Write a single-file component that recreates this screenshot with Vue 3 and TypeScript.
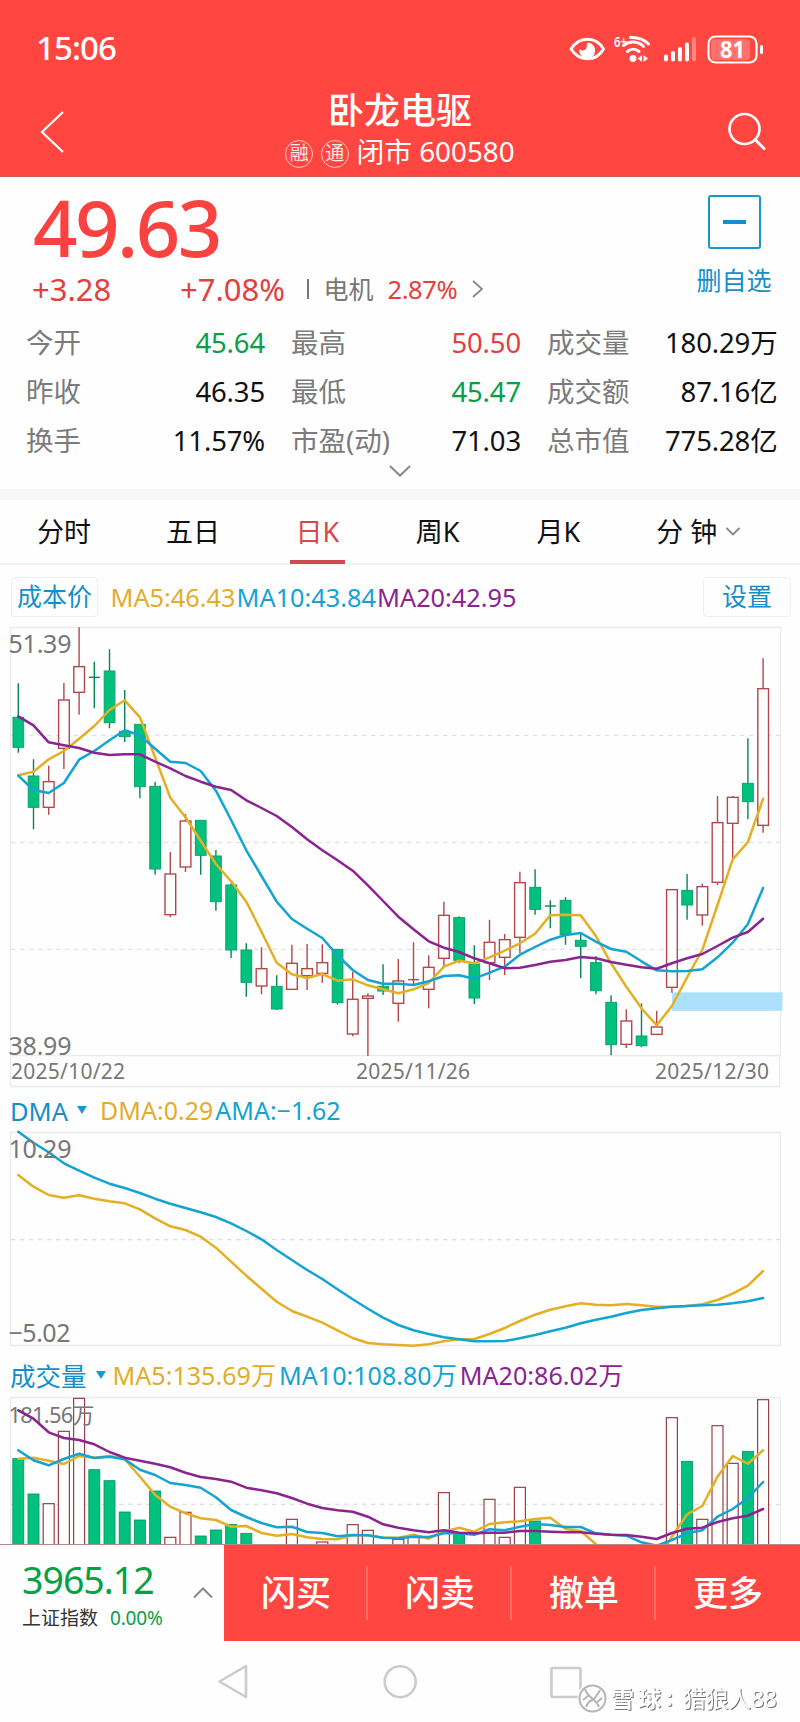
<script setup lang="ts">
type Tone = 'up' | 'down' | 'flat'
type Candle = [kind: 'r' | 'g', high: number, top: number, bottom: number, low: number]

interface Stat { label: string; value: string; tone: Tone }

const stats: Stat[] = [
  { label: '今开', value: '45.64', tone: 'down' },
  { label: '最高', value: '50.50', tone: 'up' },
  { label: '成交量', value: '180.29万', tone: 'flat' },
  { label: '昨收', value: '46.35', tone: 'flat' },
  { label: '最低', value: '45.47', tone: 'down' },
  { label: '成交额', value: '87.16亿', tone: 'flat' },
  { label: '换手', value: '11.57%', tone: 'flat' },
  { label: '市盈(动)', value: '71.03', tone: 'flat' },
  { label: '总市值', value: '775.28亿', tone: 'flat' },
]

const tabs = ['分时', '五日', '日K', '周K', '月K', '分 钟']
const actions = ['闪买', '闪卖', '撤单', '更多']

const PITCH = 15.2
const cx = (i: number) => 18.3 + i * PITCH

// Series are stored in thirds of a pixel, in blocks that share an origin.
const at = (origin: number, v: number[]) => v.map((n) => origin + n / 3)
const points = (ys: number[]) => ys.map((y, i) => `${cx(i).toFixed(1)},${y.toFixed(1)}`).join(' ')
const block = (origin: number, rows: Candle[]) =>
  rows.map(([k, h, t, b, l]) => ({ up: k === 'r', h: origin + h / 3, t: origin + t / 3, b: origin + b / 3, l: origin + l / 3 }))

// Price chart, origin at its top edge
const candles = [
  ...block(0, [
    ['g', 190, 292, 382, 398], ['g', 418, 468, 562, 628], ['r', 437, 485, 562, 584], ['r', 189, 240, 385, 447],
    ['r', 22, 140, 217, 284], ['g', 125, 172, 172, 265], ['g', 88, 153, 308, 325], ['g', 210, 334, 350, 366],
    ['g', 313, 313, 500, 535], ['g', 485, 499, 747, 764], ['r', 696, 762, 884, 892], ['r', 582, 603, 741, 756],
    ['g', 601, 601, 706, 764], ['g', 690, 708, 845, 872], ['g', 790, 795, 990, 1014], ['g', 970, 990, 1087, 1130],
    ['r', 982, 1046, 1098, 1123],
  ]),
  ...block(160, [
    ['g', 586, 619, 687, 690], ['r', 494, 550, 628, 628], ['r', 492, 566, 587, 630], ['r', 493, 548, 580, 608],
    ['g', 508, 508, 668, 674], ['r', 575, 658, 762, 769], ['r', 640, 648, 655, 828], ['g', 553, 619, 633, 645],
    ['r', 537, 603, 670, 725], ['r', 487, 599, 599, 615], ['r', 526, 562, 628, 685], ['r', 365, 406, 535, 560],
    ['g', 409, 413, 541, 550], ['g', 496, 552, 654, 672], ['r', 419, 487, 548, 600], ['r', 462, 479, 532, 585],
    ['r', 275, 308, 472, 520],
  ]),
  ...block(20, [
    ['g', 688, 742, 808, 824], ['g', 781, 798, 798, 865], ['g', 772, 781, 884, 914], ['g', 880, 901, 919, 1014],
    ['g', 948, 968, 1052, 1063], ['g', 1066, 1087, 1214, 1246], ['r', 1108, 1143, 1213, 1224], ['g', 1090, 1188, 1217, 1222],
    ['r', 1112, 1161, 1183, 1183], ['r', 749, 749, 1042, 1058], ['g', 702, 751, 795, 839], ['r', 731, 740, 825, 857],
    ['r', 468, 548, 727, 735], ['r', 468, 472, 550, 655], ['g', 295, 430, 485, 538], ['r', 55, 146, 556, 578],
  ]),
]

const priceLines = [
  {
    cls: 'ln-y',
    pts: points([
      ...at(0, [466, 455, 418, 393, 356, 318, 270, 241, 292, 412, 533, 592, 662, 732, 784, 845, 935]),
      ...at(160, [548, 583, 594, 582, 602, 598, 616, 628, 640, 628, 609, 560, 542, 550, 532, 512, 490]),
      ...at(20, [881, 826, 824, 826, 888, 970, 1040, 1105, 1156, 1098, 1012, 930, 795, 658, 606, 476]),
    ]),
  },
  {
    cls: 'ln-b',
    pts: points([
      ...at(0, [467, 510, 519, 489, 419, 393, 361, 331, 346, 386, 425, 429, 453, 512, 600, 691, 768]),
      ...at(160, [365, 417, 446, 474, 526, 570, 600, 611, 611, 615, 604, 588, 586, 596, 578, 560, 524]),
      ...at(20, [921, 899, 885, 879, 905, 927, 935, 964, 991, 994, 993, 988, 952, 908, 852, 744]),
    ]),
  },
  {
    cls: 'ln-p',
    pts: points([
      ...at(0, [289, 316, 367, 376, 384, 398, 405, 403, 403, 425, 445, 468, 485, 500, 510, 541, 564]),
      ...at(160, [108, 141, 178, 211, 241, 272, 316, 363, 410, 448, 484, 503, 516, 535, 550, 565, 563]),
      ...at(20, [975, 965, 960, 951, 955, 966, 974, 982, 986, 970, 955, 942, 918, 893, 876, 836]),
    ]),
  },
]

const dmaLines = [
  {
    cls: 'ln-y',
    pts: points(at(-50, [
      285, 320, 345, 353, 346, 356, 364, 370, 388, 415, 439, 450, 470, 503, 545, 587, 626, 665, 693, 710, 728, 751, 774, 789, 793,
      795, 797, 793, 784, 778, 777, 762, 744, 723, 704, 689, 679, 670, 674, 676, 672, 676, 680, 680, 678, 673, 660, 641, 617, 573,
    ])),
  },
  {
    cls: 'ln-b',
    pts: points(at(-50, [
      155, 188, 217, 250, 272, 293, 311, 324, 339, 356, 371, 384, 397, 411, 430, 453, 478, 510, 540, 570, 597, 628, 658, 686, 713,
      735, 751, 762, 772, 778, 784, 784, 783, 775, 765, 754, 743, 730, 719, 710, 699, 690, 685, 680, 678, 676, 674, 670, 664, 654,
    ])),
  },
]

// Volume bars: index, direction, top
const volumes = ([
  [0, 'g', 326], [1, 'g', 432], [2, 'r', 461], [3, 'r', 244], [4, 'r', 145], [5, 'g', 359], [6, 'g', 392], [7, 'g', 486],
  [8, 'g', 510], [9, 'g', 423], [10, 'r', 562], [11, 'r', 487], [12, 'g', 558], [13, 'g', 540], [14, 'g', 523], [15, 'g', 550],
  [18, 'r', 508], [20, 'r', 576], [22, 'r', 524], [23, 'r', 541], [25, 'r', 568], [26, 'r', 562], [28, 'r', 428], [29, 'g', 548],
  [31, 'r', 448], [32, 'r', 562], [33, 'r', 412], [34, 'g', 513], [43, 'r', 203], [44, 'g', 334], [45, 'r', 508], [46, 'r', 227],
  [47, 'r', 340], [48, 'g', 304], [49, 'r', 149],
] as [number, string, number][]).map(([i, k, t]) => ({ x: cx(i) - 5.5, up: k === 'r', y: t / 3 - 40 }))

const volLines = [
  {
    cls: 'ln-y',
    pts: points(at(-40, [
      326, 323, 332, 342, 318, 323, 318, 327, 380, 434, 470, 490, 505, 510, 530, 528, 549, 557, 552, 562, 567, 568, 556, 556, 563,
      563, 554, 566, 545, 533, 545, 522, 517, 514, 507, 503, 537, 543, 583, 620, 640, 645, 640, 560, 493, 468, 380, 318, 341, 301,
    ])),
  },
  {
    cls: 'ln-b',
    pts: points(at(-40, [
      301, 331, 346, 327, 311, 324, 320, 328, 359, 375, 399, 405, 413, 442, 480, 501, 519, 532, 530, 546, 549, 559, 555, 556, 563,
      565, 560, 561, 550, 550, 554, 538, 541, 530, 522, 525, 531, 531, 550, 554, 557, 577, 587, 570, 550, 541, 500, 477, 444, 396,
    ])),
  },
  {
    cls: 'ln-p',
    pts: points(at(-40, [
      181, 206, 247, 264, 270, 283, 306, 323, 332, 341, 352, 368, 381, 387, 395, 413, 421, 430, 444, 461, 474, 481, 485, 500, 523,
      533, 541, 547, 541, 548, 550, 548, 548, 543, 543, 545, 547, 547, 551, 554, 555, 560, 567, 549, 536, 533, 516, 505, 497, 477,
    ])),
  },
]
</script>

<template>
  <div class="screen">
    <header class="top">
      <div class="status">
        <span class="clock">15:06</span>
        <svg class="sys" width="200" height="34" viewBox="0 0 200 34">
          <path d="M4 18C8.500 11 14 8.200 20.500 8.200s12 2.800 16 9.800c-4 7-9.500 9.800-16 9.800S8.500 25 4 18z" fill="none" stroke="#fff" stroke-width="3" stroke-linejoin="round" />
          <path d="M21 11.500a8 8 0 1 1-8.500 6c1.500 2.500 5 2.500 6.500.2 1.500-2.200.3-5 2-6.200z" fill="#fff" />
          <text x="47" y="16" class="six" textLength="13" lengthAdjust="spacingAndGlyphs">6+</text>
          <g fill="none" stroke="#fff" stroke-width="3" stroke-linecap="round">
            <path d="M63.500 6.500c7-.3 13.500 2 18 6.500" />
            <path d="M56.500 14.500c6.500-5 14.500-4.500 20 1" />
            <path d="M60.500 20.500c3.500-3 8-3 11.500 0" />
          </g>
          <circle cx="66" cy="27.500" r="3.400" fill="#fff" />
          <path d="M70.500 27.500l4.500-3.500v7zM81 27.500l-4.500-3.500v7z" fill="#fff" />
          <g stroke="#fff" stroke-width="4" stroke-linecap="round">
            <path d="M99 25.500v3M106 22v6.500M113 18v10.500M120 13.500v15" />
            <path d="M127 8v20.500" opacity=".35" />
          </g>
          <rect x="141.500" y="5.500" width="48" height="26" rx="7" fill="none" stroke="#fff" stroke-width="2.200" />
          <rect x="144" y="8" width="39" height="21" rx="4" fill="#fff" opacity=".24" />
          <rect x="193" y="14" width="3" height="9" rx="1.500" fill="#fff" />
          <text x="153" y="26.500" class="batt" textLength="25" lengthAdjust="spacingAndGlyphs">81</text>
        </svg>
      </div>
      <div class="nav">
        <svg width="28" height="46" viewBox="0 0 28 46"><path d="M25 3L4 23 25 43" fill="none" stroke="#fff" stroke-width="2.200" /></svg>
        <div class="heading">
          <h1>卧龙电驱</h1>
          <p><i class="badge">融</i><i class="badge">通</i><span class="market">闭市 600580</span></p>
        </div>
        <svg width="40" height="42" viewBox="0 0 40 42">
          <circle cx="17.500" cy="18" r="15" fill="none" stroke="#fff" stroke-width="2.600" />
          <path d="M28 28.500l9 9" stroke="#fff" stroke-width="3" stroke-linecap="round" />
        </svg>
      </div>
    </header>

    <section class="quote">
      <div class="quote-head">
        <div class="price-col">
          <div class="price">49.63</div>
          <div class="change">
            <span class="delta">+3.28</span>
            <span class="pct">+7.08%</span>
            <span class="bar" />
            <span class="sector">电机</span>
            <span class="sector-pct">2.87%</span>
            <svg width="14" height="20" viewBox="0 0 14 20"><path d="M2 2l9 8-9 8" fill="none" stroke="#888" stroke-width="1.800" /></svg>
          </div>
        </div>
        <div class="fav">
          <div class="fav-box"><span /></div>
          <div class="fav-text">删自选</div>
        </div>
      </div>
      <dl class="stats">
        <div v-for="s in stats" :key="s.label" class="stat">
          <dt>{{ s.label }}</dt>
          <dd :class="s.tone">{{ s.value }}</dd>
        </div>
      </dl>
      <svg class="more" width="24" height="16" viewBox="0 0 24 16"><path d="M2 3l10 9.500L22 3" fill="none" stroke="#888" stroke-width="2" /></svg>
    </section>

    <nav class="tabs">
      <span v-for="(t, i) in tabs" :key="t" class="tab" :class="{ on: i === 2 }">{{ t }}</span>
      <svg width="16" height="11" viewBox="0 0 16 11"><path d="M1.500 2L8 8.500 14.500 2" fill="none" stroke="#888" stroke-width="1.800" /></svg>
    </nav>

    <div class="legend main-legend">
      <span class="chip cost">成本价</span>
      <span class="vals"><b class="y">MA5:46.43</b><b class="b">MA10:43.84</b><b class="p">MA20:42.95</b></span>
      <span class="chip set">设置</span>
    </div>

    <svg class="chart" width="800" height="470" viewBox="0 0 800 470">
      <g class="frame">
        <path d="M10.500 466.500V7.500H780.500V435.500M10.500 435.500H780.500M10.500 466.500H779.500V435.500" />
        <path class="dash" d="M11 115.300H780M11 222.300H780M11 329.300H780" />
      </g>
      <text x="8.500" y="32.500" class="scale" textLength="63">51.39</text>
      <text x="8.500" y="434.500" class="scale" textLength="63">38.99</text>
      <rect x="672" y="372.300" width="110.500" height="18.500" fill="#ade1fb" />
      <g v-for="(c, i) in candles" :key="i" :class="c.up ? 'c-up' : 'c-down'">
        <path :d="`M${cx(i)} ${c.h}V${c.t}M${cx(i)} ${c.b}V${c.l}`" />
        <path v-if="c.b - c.t < 1" :d="`M${cx(i) - 5.5} ${c.t}h11`" />
        <rect v-else :x="cx(i) - 5.3" :y="c.t" width="10.700" :height="c.b - c.t" />
      </g>
      <polyline v-for="l in priceLines" :key="l.cls" :class="l.cls" :points="l.pts" />
      <g class="date">
        <text x="11" y="458.500" textLength="114">2025/10/22</text>
        <text x="356" y="458.500" textLength="114">2025/11/26</text>
        <text x="655" y="458.500" textLength="114">2025/12/30</text>
      </g>
    </svg>

    <div class="legend dma-legend">
      <span class="name">DMA</span><i class="tri" />
      <span class="vals"><b class="y">DMA:0.29</b><b class="b">AMA:−1.62</b></span>
    </div>
    <svg class="chart" width="800" height="220" viewBox="0 0 800 220">
      <g class="frame">
        <path d="M10.500 2.500H780.500V215.500H10.500z" />
        <path class="dash" d="M11 109.500H780" />
      </g>
      <polyline v-for="l in dmaLines" :key="l.cls" :class="l.cls" :points="l.pts" />
      <text x="8.500" y="28" class="scale" textLength="63">10.29</text>
      <text x="8.500" y="212" class="scale" textLength="62">−5.02</text>
    </svg>

    <div class="legend vol-legend">
      <span class="name">成交量</span><i class="tri" />
      <span class="vals"><b class="y">MA5:135.69万</b><b class="b">MA10:108.80万</b><b class="p">MA20:86.02万</b></span>
    </div>
    <svg class="chart" width="800" height="154" viewBox="0 0 800 154">
      <g class="frame">
        <path d="M10.500 160V7.500H780.500V160" />
        <path class="dash" d="M11 114.500H780" />
      </g>
      <rect v-for="(v, i) in volumes" :key="i" :class="v.up ? 'v-up' : 'v-down'" :x="v.x" :y="v.y" width="11" height="200" />
      <text x="8.500" y="33" class="scale small" textLength="86">181.56万</text>
      <polyline v-for="l in volLines" :key="l.cls" :class="l.cls" :points="l.pts" />
    </svg>

    <div class="dock">
      <div class="index">
        <div>
          <div class="index-val">3965.12</div>
          <div class="index-name">上证指数<em>0.00%</em></div>
        </div>
        <svg width="22" height="14" viewBox="0 0 22 14"><path d="M2 11.500l9-9 9 9" fill="none" stroke="#888" stroke-width="2" /></svg>
      </div>
      <div v-for="a in actions" :key="a" class="act">{{ a }}</div>
    </div>

    <footer class="sysnav">
      <svg width="800" height="81" viewBox="0 0 800 81">
        <g fill="none" stroke="#ccc" stroke-width="2.600" stroke-linejoin="round">
          <path d="M246 25v31L219.500 40.500z" />
          <circle cx="400.200" cy="40.700" r="15.500" />
          <rect x="551.500" y="27" width="29" height="29" rx="1" />
        </g>
        <g class="mark">
          <circle cx="592.500" cy="57.500" r="13" />
          <path d="M585 48c2 8 10 9 14 18M600 49c-3 5-4 8-8 10s-5 4-6 7M583 59l6-5M596 62l6-5" />
        </g>
        <text x="611" y="66" class="wm bold" textLength="50">雪球</text>
        <text x="666" y="65" class="wm bold">:</text>
        <text x="683" y="66" class="wm" textLength="94">猎狼人88</text>
      </svg>
    </footer>
  </div>
</template>

<style>
body {
  background: #fff;
}
</style>

<style scoped>
.screen {
  width: 800px;
  height: 1722px;
  overflow: hidden;
  background: #fefefe;
  font-family: "Noto Sans", "Noto Sans CJK SC", sans-serif;
  color: #111;
}
svg { display: block; flex: none; }
.top { height: 177px; background: #ff4640; color: #fff; border-bottom: 1px solid #cf5a55; box-sizing: border-box; }
.status { height: 88px; padding: 8px 33.500px 0 36px; display: flex; align-items: center; justify-content: space-between; box-sizing: border-box; }
.clock { font-size: 33px; font-weight: 500; line-height: 40px; letter-spacing: -.9px; }
.six { font: 600 15px "Noto Sans"; fill: #fff; }
.batt { font: 700 23px "Noto Sans"; fill: #fff; }
.nav { height: 88px; display: flex; justify-content: space-between; align-items: center; padding: 0 33px 0 38px; }
.heading { text-align: center; margin: -6px 0 0 7px; }
h1 { margin: 1px 0 0; font-size: 36px; line-height: 44px; font-weight: 500; }
.heading p { margin: 0; height: 37px; display: flex; align-items: center; justify-content: center; }
.badge { font-style: normal; width: 28px; height: 28px; box-sizing: border-box; border: 1.5px solid #ffc9c7; border-radius: 50%; font-size: 19px; line-height: 25px; text-align: center; margin: 5px 7.500px 0 0; color: #ffe9e8; }
.market { font-size: 27.800px; line-height: 37px; white-space: nowrap; }

.quote { height: 312px; }
.quote-head { height: 141px; display: flex; justify-content: space-between; }
.price-col { padding-left: 33px; }
.price { height: 82px; line-height: 82px; margin-top: 9px; font-size: 78px; font-weight: 500; letter-spacing: -2.600px; color: #fa4340; }
.change { display: flex; align-items: center; height: 40px; margin-top: 1px; line-height: 40px; color: #e2403e; font-size: 31px; margin-left: -1px; }
.delta { width: 148px; }
.pct { width: 127px; }
.bar { width: 1.500px; height: 20px; background: #777; margin-right: 15px; }
.sector { width: 64px; font-size: 25px; color: #777; }
.sector-pct { font-size: 25.500px; width: 83px; letter-spacing: -.4px; }
.fav { width: 104px; margin-right: 14px; display: flex; flex-direction: column; align-items: center; }
.fav-box { margin-top: 18px; width: 53px; height: 54px; box-sizing: border-box; border: 2px solid #1896cf; border-radius: 3px; display: flex; align-items: center; justify-content: center; }
.fav-box span { width: 23px; height: 4px; background: #1290cd; }
.fav-text { font-size: 25px; line-height: 36px; margin-top: 13px; color: #1290cd; }
.stats { margin: 0; padding: 0 22px 0 26px; height: 148px; display: grid; grid-template-columns: 239px 230px 230.500px; column-gap: 26px; grid-auto-rows: 49.400px; }
.stat { display: flex; justify-content: space-between; align-items: center; font-size: 27.500px; line-height: 40px; white-space: nowrap; }
.stat dt { color: #7b7b7b; }
.stat dd { margin: 0; letter-spacing: -.15px; }
.up { color: #e2403e; }
.down { color: #07a045; }
.flat { color: #111; }
.more { margin: -3px auto 0; }

.tabs { height: 76px; border-top: 11px solid #f7f7f7; border-bottom: 2px solid #f2f2f2; box-sizing: border-box; display: flex; align-items: stretch; padding-left: 37px; }
.tab { font-size: 27px; line-height: 64px; box-sizing: border-box; margin-right: 75px; height: 64px; white-space: nowrap; }
.tab:nth-child(2) { margin-right: 70px; }
.tab.on { color: #d9474a; border-bottom: 4px solid #cf4a50; padding: 0 5.500px; margin-right: 71px; }
.tab:nth-child(4) { margin-right: 77px; }
.tab:nth-child(5) { margin-right: 76px; }
.tab:nth-child(6) { margin-right: 8px; }
.tabs svg { align-self: center; }

.legend { display: flex; align-items: center; white-space: nowrap; box-sizing: border-box; }
.legend b { font-weight: 400; }
.y { color: #e3ac2c; }
.b { color: #13a3d3; }
.p { color: #8b2390; }
.main-legend { height: 55px; padding: 8px 9px 0 11px; }
.chip { height: 40px; box-sizing: border-box; border: 1.500px solid #efefef; border-radius: 4px; text-align: center; font-size: 25px; line-height: 36px; color: #128fcb; }
.cost { width: 87px; }
.set { width: 88px; margin-left: auto; }
.vals { display: flex; font-size: 25px; line-height: 36px; }
.main-legend .vals { margin-left: 12.500px; gap: 1px; font-size: 25.300px; }
.chart .scale { font-size: 25px; fill: #777; }
.chart .small { font-size: 22px; }
.date { font-size: 21px; fill: #777; }
.frame path { fill: none; stroke: #ebebeb; stroke-width: 1.300; }
.frame .dash { stroke: #e2e2e2; stroke-dasharray: 4.500 4.500; }
.c-up path, .c-up rect { stroke: #b3484c; stroke-width: 1.400; fill: #fefefe; }
.c-down path, .c-down rect { stroke: #0b8458; stroke-width: 1.400; }
.c-down rect { fill: #02c07e; stroke: #06a46a; stroke-width: 1; }
.v-up { fill: #fefefe; stroke: #9a3f44; stroke-width: 1.200; }
.v-down { fill: #02c07e; stroke: #07925f; stroke-width: .8; }
polyline { fill: none; stroke-width: 2.500; stroke-linejoin: round; stroke-linecap: round; }
.ln-y { stroke: #e5af24; }
.ln-b { stroke: #12a4d2; }
.ln-p { stroke: #8b2390; }

.dma-legend, .vol-legend { padding-left: 10px; }
.dma-legend { height: 40px; }
.dma-legend .name { font-size: 25.500px; margin-top: 2px; }
.vol-legend { height: 40px; padding-top: 9px; }
.name { font-size: 25px; color: #128fcb; line-height: 36px; }
.tri { border: 5.500px solid transparent; border-top: 8px solid #109bd8; border-bottom: 0; margin: 0 13px 0 9px; }
.dma-legend .vals { gap: 2px; }
.vol-legend .name { font-size: 25.500px; margin-top: 2px; }
.vol-legend .tri { margin-right: 7px; }
.vol-legend .vals { gap: 3px; font-size: 25.100px; }

.dock { height: 97px; display: flex; border-top: 1px solid #b58a8a; box-sizing: border-box; }
.index { width: 224px; box-sizing: border-box; padding: 0 10px 0 22px; display: flex; align-items: center; justify-content: space-between; background: #fefefe; }
.index-val { font-size: 37.500px; line-height: 46px; letter-spacing: -1px; margin-top: 4px; color: #07a045; }
.index-name { font-size: 19px; line-height: 30px; margin-top: 0; color: #333; }
.index-name em { font-style: normal; color: #07a045; margin-left: 12px; letter-spacing: -.2px; }
.act { flex: 1; background: #ff4640; color: #fff; font-size: 35px; font-weight: 500; line-height: 95px; text-align: center; background-image: linear-gradient(#ff6f61, #ff6f61); background-size: 2px 54px; background-repeat: no-repeat; background-position: right 21px; box-sizing: border-box; }
.act:last-child { background-image: none; }
.sysnav { height: 81px; }
.mark { fill: none; stroke: #b5b5b5; stroke-width: 2; filter: drop-shadow(-1px -1px 0 #fff); }
.mark circle { fill: #fefefe; }
.wm { font-size: 23px; fill: #fff; filter: drop-shadow(1px 1px .6px #777); }
.bold { font-weight: 700; }
</style>
